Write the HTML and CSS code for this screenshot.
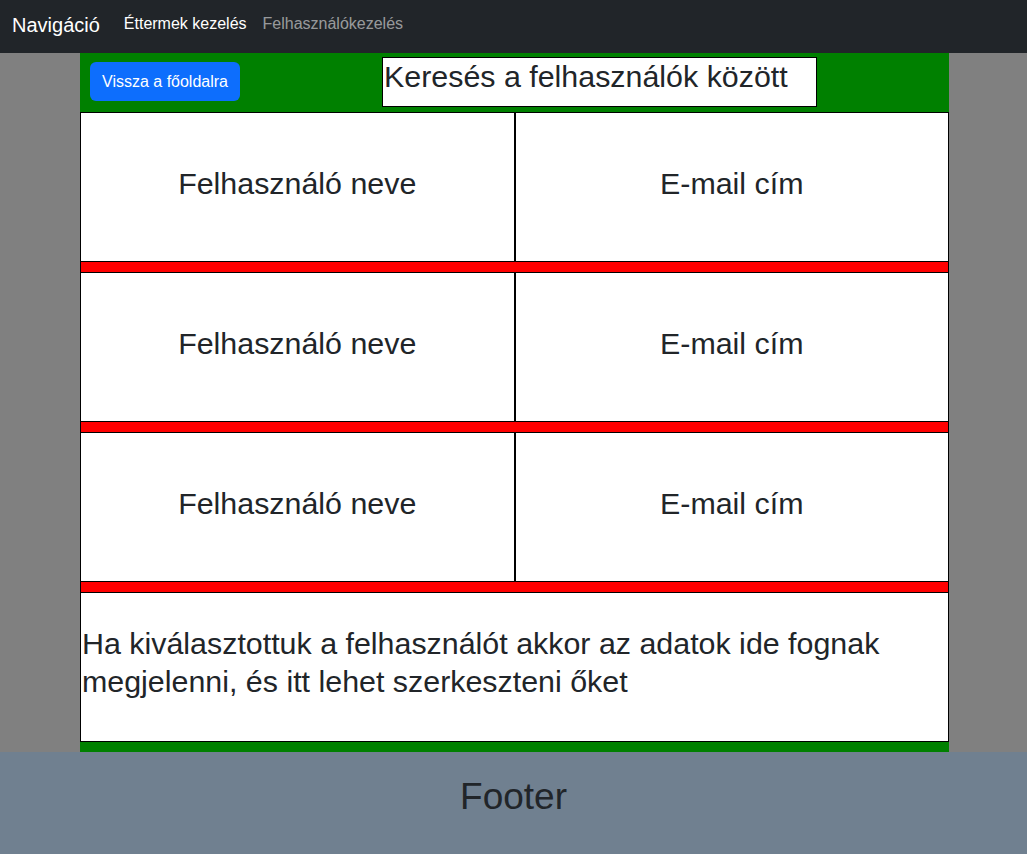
FILE: index.html
```html
<!DOCTYPE html>
<html lang="hu">
<head>
<meta charset="utf-8">
<title>Felhasználókezelés</title>
<link rel="stylesheet" href="styles.css">
</head>
<body>
<nav class="navbar">
  <span class="brand">Navigáció</span>
  <ul class="nav-links">
    <li><a class="nav-link active" href="#">Éttermek kezelés</a></li>
    <li><a class="nav-link" href="#">Felhasználókezelés</a></li>
  </ul>
</nav>
<main class="main">
  <div class="panel">
    <div class="top-bar">
      <button class="btn-back" type="button">Vissza a főoldalra</button>
      <div class="search">Keresés a felhasználók között</div>
    </div>
    <div class="user-list">
      <div class="user-row">
        <div class="cell">Felhasználó neve</div>
        <div class="cell">E-mail cím</div>
      </div>
      <div class="user-row">
        <div class="cell">Felhasználó neve</div>
        <div class="cell">E-mail cím</div>
      </div>
      <div class="user-row">
        <div class="cell">Felhasználó neve</div>
        <div class="cell">E-mail cím</div>
      </div>
    </div>
    <div class="details">
      <p>Ha kiválasztottuk a felhasználót akkor az adatok ide fognak megjelenni, és itt lehet szerkeszteni őket</p>
    </div>
  </div>
</main>
<footer class="footer">Footer</footer>
</body>
</html>
```
FILE: styles.css
```css
* {
  box-sizing: border-box;
}

html, body {
  margin: 0;
  padding: 0;
}

body {
  font-family: "Liberation Sans", Arial, sans-serif;
  color: #212529;
  background: #808080;
}

.navbar {
  display: flex;
  align-items: flex-start;
  height: 53px;
  padding: 10px 12px 0;
  background: #212529;
}

.brand {
  font-size: 20px;
  line-height: 30px;
  color: #fff;
  margin-right: 16px;
}

.nav-links {
  display: flex;
  list-style: none;
  margin: 2px 0 0;
  padding: 0;
}

.nav-link {
  display: block;
  padding: 0 8px;
  font-size: 16px;
  line-height: 24px;
  color: rgba(255, 255, 255, 0.55);
  text-decoration: none;
}

.nav-link.active {
  color: #fff;
}

.main {
  background: #808080;
  height: 699px;
}

.panel {
  width: 869px;
  margin-left: 80px;
  background: #008000;
  padding-bottom: 10px;
}

.top-bar {
  display: flex;
  align-items: center;
  height: 59px;
  padding-left: 10px;
}

.btn-back {
  width: 150px;
  height: 39px;
  margin-top: -2px;
  padding: 0 12px;
  border: 0;
  border-radius: 6px;
  background: #0d6efd;
  color: #fff;
  font-family: inherit;
  font-size: 16px;
  line-height: 24px;
}

.search {
  width: 435px;
  height: 50px;
  margin-left: 142px;
  margin-top: -1px;
  border: 1px solid #000;
  background: #fff;
  font-size: 30.4px;
  padding: 1px 0 0 1px;
  white-space: nowrap;
}

.user-list {
  display: flex;
  flex-direction: column;
  gap: 10px;
  padding-bottom: 10px;
  background: #ff0000;
  box-shadow: inset 1px 0 #000, inset -1px 0 #000;
}

.user-row {
  display: flex;
}

.cell {
  flex: 1 1 50%;
  height: 150px;
  border: 1px solid #000;
  background: #fff;
  display: flex;
  align-items: center;
  justify-content: center;
  padding-bottom: 8px;
  font-size: 30.4px;
}

.details {
  height: 150px;
  border: 1px solid #000;
  background: #fff;
  display: flex;
  align-items: center;
  padding-bottom: 10px;
}

.details p {
  margin: 0;
  padding-left: 1px;
  font-size: 30.4px;
  line-height: 38px;
}

.footer {
  height: 102px;
  padding-top: 24px;
  background: #708090;
  text-align: center;
  font-size: 37px;
}
```
